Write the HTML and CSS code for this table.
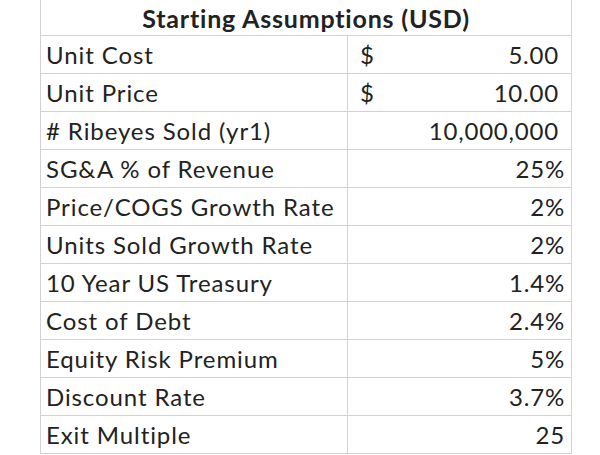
FILE: index.html
```html
<!DOCTYPE html>
<html>
<head>
<meta charset="utf-8">
<link rel="stylesheet" href="styles.css">
</head>
<body>
<div class="sheet">
  <table class="assump">
    <colgroup><col class="c1"><col class="c2"></colgroup>
    <tr><th class="title" colspan="2">Starting Assumptions (USD)</th></tr>
    <tr><td class="lbl">Unit Cost</td><td class="val acct"><span class="cur">$</span><span class="num">5.00</span></td></tr>
    <tr><td class="lbl">Unit Price</td><td class="val acct"><span class="cur">$</span><span class="num">10.00</span></td></tr>
    <tr><td class="lbl"># Ribeyes Sold (yr1)</td><td class="val acct"><span class="cur"></span><span class="num">10,000,000</span></td></tr>
    <tr><td class="lbl">SG&amp;A % of Revenue</td><td class="val pct">25%</td></tr>
    <tr><td class="lbl">Price/COGS Growth Rate</td><td class="val pct">2%</td></tr>
    <tr><td class="lbl">Units Sold Growth Rate</td><td class="val pct">2%</td></tr>
    <tr><td class="lbl">10 Year US Treasury</td><td class="val pct">1.4%</td></tr>
    <tr><td class="lbl">Cost of Debt</td><td class="val pct">2.4%</td></tr>
    <tr><td class="lbl">Equity Risk Premium</td><td class="val pct">5%</td></tr>
    <tr><td class="lbl">Discount Rate</td><td class="val pct">3.7%</td></tr>
    <tr><td class="lbl">Exit Multiple</td><td class="val pct">25</td></tr>
  </table>
</div>
</body>
</html>
```
FILE: styles.css
```css
html, body {
  margin: 0;
  padding: 0;
  background: #ffffff;
}
body {
  font-family: Lato, "Open Sans", sans-serif;
  color: #222222;
}
.sheet {
  padding-left: 40px;
  margin-top: -6px;
}
.assump {
  border-collapse: collapse;
  width: 531px;
  table-layout: fixed;
}
.c1 {
  width: 307px;
}
.c2 {
  width: 224px;
}
.assump td, .assump th {
  border: 1px solid #d2d2d2;
  padding: 0;
}
.title {
  height: 38px;
  font-weight: bold;
  font-size: 25px;
  letter-spacing: 0.8px;
  text-align: center;
  vertical-align: bottom;
  padding-bottom: 2px !important;
}
.lbl {
  height: 37px;
  font-size: 24px;
  letter-spacing: 0.9px;
  padding-left: 5px !important;
  white-space: nowrap;
}
.val {
  font-size: 24px;
  letter-spacing: 0.8px;
  white-space: nowrap;
}
.pct {
  text-align: right;
  padding-right: 6px !important;
}
.acct {
  padding-left: 12px !important;
  padding-right: 12px !important;
}
.acct .cur {
  float: left;
}
.acct .num {
  float: right;
}
```
